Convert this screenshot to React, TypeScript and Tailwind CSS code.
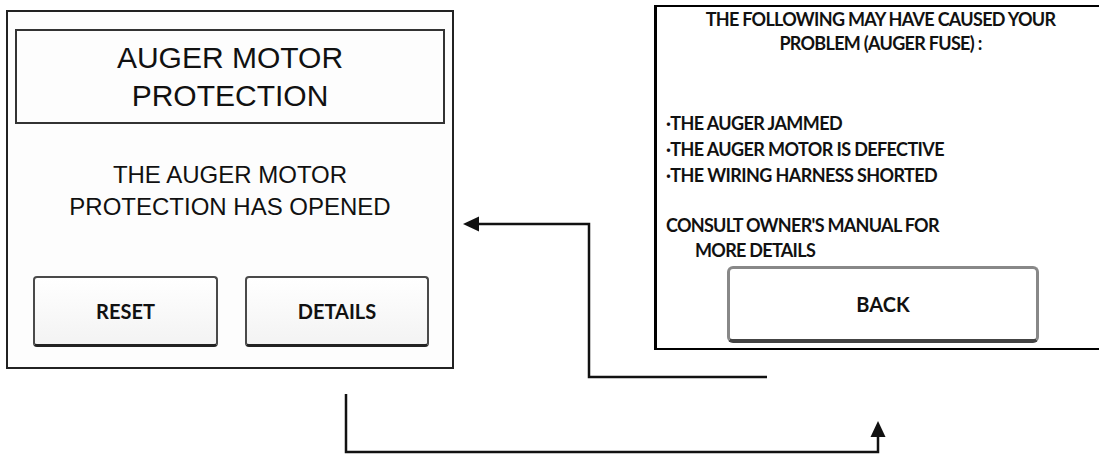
import React from "react";

const sans = { fontFamily: '"Liberation Sans", Arial, sans-serif' };

function PanelButton({ label, className }: { label: string; className: string }) {
  return (
    <button
      type="button"
      className={`flex items-center justify-center font-['Lato',sans-serif] font-bold text-[20px] text-[#111] ${className}`}
    >
      {label}
    </button>
  );
}

function AlarmPanel() {
  return (
    <div className="mt-[10px] ml-[6px] flex h-[359px] w-[448px] shrink-0 flex-col items-center border-2 border-[#222] bg-[#fdfdfd]">
      {/* title */}
      <div
        className="mt-[17px] flex h-[95px] w-[430px] items-center justify-center border-2 border-[#333] text-center text-[30px] leading-[38px] text-[#111]"
        style={sans}
      >
        AUGER MOTOR
        <br />
        PROTECTION
      </div>

      {/* message */}
      <div className="mt-[35px] text-center text-[24px] leading-[32px] text-[#111]" style={sans}>
        THE AUGER MOTOR
        <br />
        PROTECTION HAS OPENED
      </div>

      {/* actions */}
      <div className="mt-auto mb-[20px] flex gap-[27px] pl-[2px]">
        <PanelButton
          label="RESET"
          className="h-[71px] w-[185px] rounded-[4px] border-2 border-b-[3px] border-[#4a4a4a] border-b-[#222] bg-gradient-to-b from-white to-[#f3f3f3]"
        />
        <PanelButton
          label="DETAILS"
          className="h-[71px] w-[184px] rounded-[4px] border-2 border-b-[3px] border-[#4a4a4a] border-b-[#222] bg-gradient-to-b from-white to-[#f3f3f3]"
        />
      </div>
    </div>
  );
}

function DetailsPanel() {
  return (
    <div className="mt-[5px] ml-[200px] flex h-[345px] w-[452px] shrink-0 flex-col border-2 border-l-[3px] border-black bg-white font-['Lato',sans-serif] font-bold text-[#111]">
      <div className="text-center text-[18px] leading-[24px] tracking-[-0.7px]">
        THE FOLLOWING MAY HAVE CAUSED YOUR
        <br />
        PROBLEM (AUGER FUSE) :
      </div>

      <div className="mt-[55px] pl-[9px] text-[18px] leading-[26px] tracking-[-0.6px]">
        <div>·THE AUGER JAMMED</div>
        <div>·THE AUGER MOTOR IS DEFECTIVE</div>
        <div>·THE WIRING HARNESS SHORTED</div>
      </div>

      <div className="mt-[25px] pl-[9px] text-[18px] leading-[25px] tracking-[-0.7px]">
        <div>CONSULT OWNER'S MANUAL FOR</div>
        <div className="pl-[29px]">MORE DETAILS</div>
      </div>

      <PanelButton
        label="BACK"
        className="mt-[3px] ml-[70px] h-[77px] w-[312px] rounded-[6px] border-[3px] border-b-4 border-[#888] border-b-[#444] bg-white"
      />
    </div>
  );
}

function Connectors() {
  return (
    <svg
      className="pointer-events-none absolute inset-0"
      width={1099}
      height={454}
      viewBox="0 0 1099 454"
    >
      <path d="M478 224 H589 V377 H767" fill="none" stroke="#111" strokeWidth={2.5} />
      <polygon points="463,224 479,216.5 479,231.5" fill="#111" />
      <path d="M346 394 V452 H878 V436" fill="none" stroke="#111" strokeWidth={2.5} />
      <polygon points="878,421 870.5,437 885.5,437" fill="#111" />
    </svg>
  );
}

export default function App() {
  return (
    <div className="relative flex h-[454px] w-[1099px] items-start overflow-hidden bg-white">
      <AlarmPanel />
      <DetailsPanel />
      <Connectors />
    </div>
  );
}
